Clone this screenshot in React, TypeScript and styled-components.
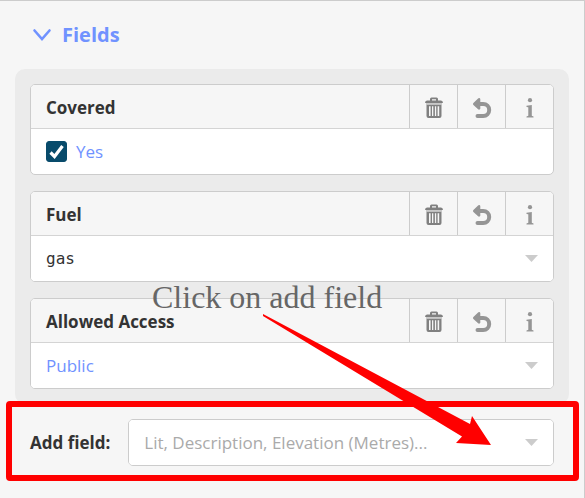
import React, { useState } from "react";
import styled, { createGlobalStyle } from "styled-components";

const GlobalStyle = createGlobalStyle`
  *, *::before, *::after { box-sizing: border-box; }
  body {
    margin: 0;
    background: #f6f6f6;
    color: #333;
    font-family: "Open Sans", "Noto Sans", sans-serif;
    font-size: 17px;
    line-height: 24px;
  }
`;

const Sidebar = styled.main`
  position: relative;
  min-height: 100vh;
  padding: 20px 15px 16px;
  border-top: 1px solid #ccc;
  border-right: 1px solid #ccc;
`;

const SectionToggle = styled.button`
  display: flex;
  align-items: center;
  gap: 10px;
  margin: 0 0 20px 17px;
  padding: 0;
  border: 0;
  background: none;
  color: #7092ff;
  font: bold 20px/28px "Open Sans", "Noto Sans", sans-serif;
  cursor: pointer;
`;

const FieldPanel = styled.section`
  display: grid;
  gap: 16px;
  padding: 15px;
  border-radius: 10px;
  background: #ebebeb;
`;

const Card = styled.div`
  border: 1px solid #ccc;
  border-radius: 5px;
  background: #fff;
  overflow: hidden;
`;

const CardHeader = styled.div`
  display: flex;
  height: 44px;
  border-bottom: 1px solid #d4d4d4;
  background: #f6f6f6;
`;

const CardTitle = styled.label`
  flex: 1;
  padding: 11px 0 0 15px;
  font-weight: bold;
`;

const IconButton = styled.button`
  display: flex;
  align-items: center;
  justify-content: center;
  width: 48px;
  padding: 2px 0 0;
  border: 0;
  border-left: 1px solid #ccc;
  background: none;
  color: #959595;
  cursor: pointer;
`;

const CheckRow = styled.label`
  display: flex;
  align-items: center;
  gap: 9px;
  height: 45px;
  padding: 0 15px;
  color: #7092ff;
`;

const CheckWrap = styled.span`
  display: grid;
  width: 21px;
  height: 21px;
  & > * { grid-area: 1 / 1; }
  svg { pointer-events: none; }
`;

const Checkbox = styled.input`
  appearance: none;
  width: 21px;
  height: 21px;
  margin: 0;
  border: 1px solid #084b6b;
  border-radius: 3px;
  background: #fff;
  &:checked { background: #084b6b; }
`;

const SelectWrap = styled.div`
  display: grid;
  flex: 1;
  align-items: center;
  & > * { grid-area: 1 / 1; }
  svg {
    justify-self: end;
    margin-right: 15px;
    pointer-events: none;
  }
`;

const Select = styled.select<{ $tone: "value" | "shared" | "hint"; $mono?: boolean }>`
  appearance: none;
  width: 100%;
  height: 45px;
  padding: 0 40px 0 15px;
  border: 0;
  background: #fff;
  color: ${(p) => ({ value: "#333", shared: "#7092ff", hint: "#aaa" })[p.$tone]};
  font-family: ${(p) => (p.$mono ? '"DejaVu Sans Mono", monospace' : '"Open Sans", "Noto Sans", sans-serif')};
  font-size: ${(p) => (p.$mono ? 16 : 17)}px;
`;

const AddRow = styled.div`
  position: relative;
  display: flex;
  align-items: center;
  gap: 18px;
  margin-top: 15px;
  padding-left: 15px;
  padding-right: 15px;
`;

const AddLabel = styled.label`
  font-weight: bold;
  white-space: nowrap;
`;

const AddBox = styled(Card)`
  display: flex;
  flex: 1;
`;

const Highlight = styled.div`
  position: absolute;
  inset: -18px -10px -15px -9px;
  border: 6px solid #f00;
  border-radius: 4px;
  pointer-events: none;
`;

const Caption = styled.div`
  position: absolute;
  top: 278px;
  left: 152px;
  color: #666;
  font: 32px/36px "Liberation Serif", serif;
  white-space: nowrap;
  pointer-events: none;
`;

const Arrow = styled.svg`
  position: absolute;
  top: 312px;
  left: 262px;
  pointer-events: none;
`;

const ChevronIcon = () => (
  <svg width="20" height="14" viewBox="0 0 20 14" aria-hidden="true">
    <path d="M2.500 2.500 10 11 17.500 2.500" fill="none" stroke="currentColor" strokeWidth="2.6" strokeLinecap="round" />
  </svg>
);

const TrashIcon = () => (
  <svg width="18" height="21" viewBox="0 0 18 21" aria-hidden="true">
    <path d="M5 4V2Q5 .5 6.5 .5h5Q13 .5 13 2v2h-2V2.3H7V4Z" fill="#808080" />
    <path d="M2 3.5h14q2 0 2 2.5H0q0-2.500 2-2.500Z" fill="#808080" />
    <path d="M1 6h16v1.800H1Z" fill="#c8c8c8" />
    <path d="M1.500 7.800h15V19q0 2-2 2h-11q-2 0-2-2ZM4 9.200v9.800h1.600V9.200Zm3 0v9.800h1.300V9.200Zm2.900 0v9.800h1.300V9.200Zm2.700 0v9.800h1.600V9.200Z" fill="#808080" fillRule="evenodd" />
  </svg>
);

const UndoIcon = () => (
  <svg width="20" height="22" viewBox="0 0 20 22" aria-hidden="true">
    <path d="M7 2.300 2.300 7 7 11.400V7Z" fill="currentColor" stroke="currentColor" strokeWidth="2.600" strokeLinejoin="round" />
    <path d="M6 7h5.200a6 6 0 0 1 0 12H5.500" fill="none" stroke="currentColor" strokeWidth="4" strokeLinecap="round" />
  </svg>
);

const InfoIcon = () => (
  <svg width="8" height="20" viewBox="0 0 8 20" aria-hidden="true">
    <circle cx="4" cy="2.200" r="2.100" fill="currentColor" />
    <path d="M.5 7.800 5.800 7v10.800l1.700.6v1.100H.5v-1.100l1.800-.6V9.300L.5 8.900Z" fill="currentColor" />
  </svg>
);

const CheckIcon = () => (
  <svg width="21" height="21" viewBox="0 0 21 21" aria-hidden="true">
    <path d="m4.500 11.500 4 4L16.500 5" fill="none" stroke="#fff" strokeWidth="3.200" />
  </svg>
);

const CaretIcon = () => (
  <svg width="13" height="7" viewBox="0 0 13 7" aria-hidden="true">
    <path d="M0 0h13L6.500 7Z" fill="#ccc" />
  </svg>
);

interface FieldCardProps {
  id: string;
  title: string;
  children: React.ReactNode;
}

function FieldCard({ id, title, children }: FieldCardProps) {
  return (
    <Card>
      <CardHeader>
        <CardTitle htmlFor={id}>{title}</CardTitle>
        <IconButton aria-label={`Remove ${title}`}><TrashIcon /></IconButton>
        <IconButton aria-label={`Undo ${title}`}><UndoIcon /></IconButton>
        <IconButton aria-label={`About ${title}`}><InfoIcon /></IconButton>
      </CardHeader>
      {children}
    </Card>
  );
}

export default function App() {
  const [covered, setCovered] = useState(true);
  return (
    <>
      <GlobalStyle />
      <Sidebar>
        <SectionToggle aria-expanded="true"><ChevronIcon />Fields</SectionToggle>
        <FieldPanel>
          <FieldCard id="covered" title="Covered">
            <CheckRow>
              <CheckWrap>
                <Checkbox id="covered" type="checkbox" checked={covered} onChange={(e) => setCovered(e.target.checked)} />
                <CheckIcon />
              </CheckWrap>
              Yes
            </CheckRow>
          </FieldCard>
          <FieldCard id="fuel" title="Fuel">
            <SelectWrap>
              <Select id="fuel" $tone="value" $mono><option>gas</option></Select>
              <CaretIcon />
            </SelectWrap>
          </FieldCard>
          <FieldCard id="access" title="Allowed Access">
            <SelectWrap>
              <Select id="access" $tone="shared"><option>Public</option></Select>
              <CaretIcon />
            </SelectWrap>
          </FieldCard>
        </FieldPanel>
        <AddRow>
          <AddLabel htmlFor="add-field">Add field:</AddLabel>
          <AddBox>
            <SelectWrap>
              <Select id="add-field" $tone="hint"><option>Lit, Description, Elevation (Metres)...</option></Select>
              <CaretIcon />
            </SelectWrap>
          </AddBox>
          <Highlight />
        </AddRow>
        <Caption>Click on add field</Caption>
        <Arrow width="230" height="134" viewBox="0 0 230 134" aria-hidden="true">
          <path d="M1 1 208 111 210 103 229 132 194 130 200 123.500 1 3Z" fill="#f00" />
        </Arrow>
      </Sidebar>
    </>
  );
}
